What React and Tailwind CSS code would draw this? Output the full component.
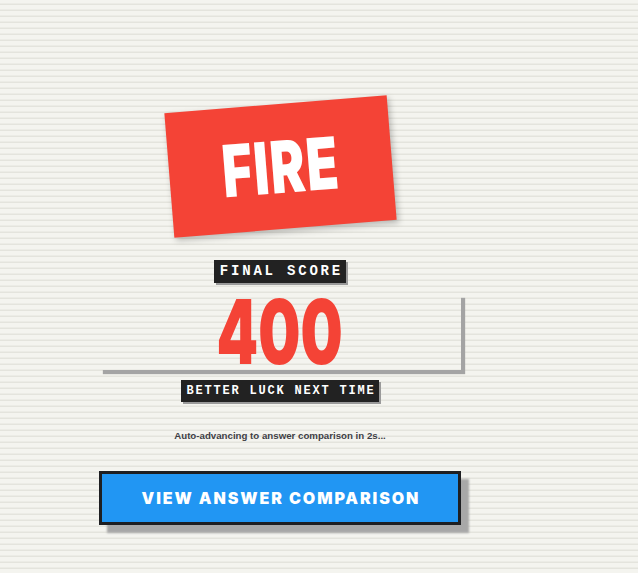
import React from "react";

const App = () => {
  return (
    <div className="w-full min-h-screen h-[573px] overflow-hidden bg-[#f4f4ef] bg-[repeating-linear-gradient(0deg,transparent_0px,transparent_4px,#e4e4dd_4px,#e4e4dd_5px,#ecece6_5px,#ecece6_6px)]">
      <div className="ml-[99px] w-[362px] pt-[104px] flex flex-col items-center">
        {/* Result card */}
        <div className="w-[223px] h-[125px] bg-[#f44336] -rotate-[4.6deg] shadow-[2px_3px_6px_rgba(0,0,0,0.25)] flex items-center justify-center">
          <span className="text-white text-[72px] leading-none font-black tracking-[2px] scale-x-[0.72] [font-family:Inter,'Liberation_Sans',sans-serif]">
            FIRE
          </span>
        </div>

        {/* Final score label */}
        <div className="mt-[31px] bg-[#222222] px-[6px] h-[23px] flex items-center shadow-[2px_2px_0_#9a9a9a]">
          <span className="text-white text-[14px] font-bold tracking-[0.2em] mr-[-0.2em] [font-family:'Liberation_Mono',monospace]">
            FINAL SCORE
          </span>
        </div>

        {/* Score box */}
        <div className="mt-[11px] w-[362px] h-[76px] shadow-[4px_4px_1px_#a4a4a4] flex items-center justify-center">
          <span className="text-[#f44336] text-[90px] leading-[76px] font-black scale-x-[0.66] [font-family:Inter,'Liberation_Sans',sans-serif]">
            400
          </span>
        </div>

        {/* Message label */}
        <div className="mt-[10px] bg-[#222222] px-[5px] h-[22px] flex items-center shadow-[2px_2px_0_#9a9a9a]">
          <span className="text-white text-[12px] font-bold tracking-[0.15em] mr-[-0.15em] [font-family:'Liberation_Mono',monospace]">
            BETTER LUCK NEXT TIME
          </span>
        </div>

        <p className="mt-[27px] text-[9.7px] font-bold text-[#3f3f46] [font-family:'Liberation_Sans',Arial,sans-serif]">
          Auto-advancing to answer comparison in 2s...
        </p>

        <button className="mt-[27px] w-[362px] h-[54px] bg-[#2196f3] border-[3px] border-[#1e1f22] shadow-[8px_8px_2px_#a8a8a8] flex items-center justify-center">
          <span className="text-white text-[16px] font-black tracking-[0.12em] mr-[-0.12em] [font-family:Inter,'Liberation_Sans',sans-serif]">
            VIEW ANSWER COMPARISON
          </span>
        </button>
      </div>
    </div>
  );
};

export default App;
